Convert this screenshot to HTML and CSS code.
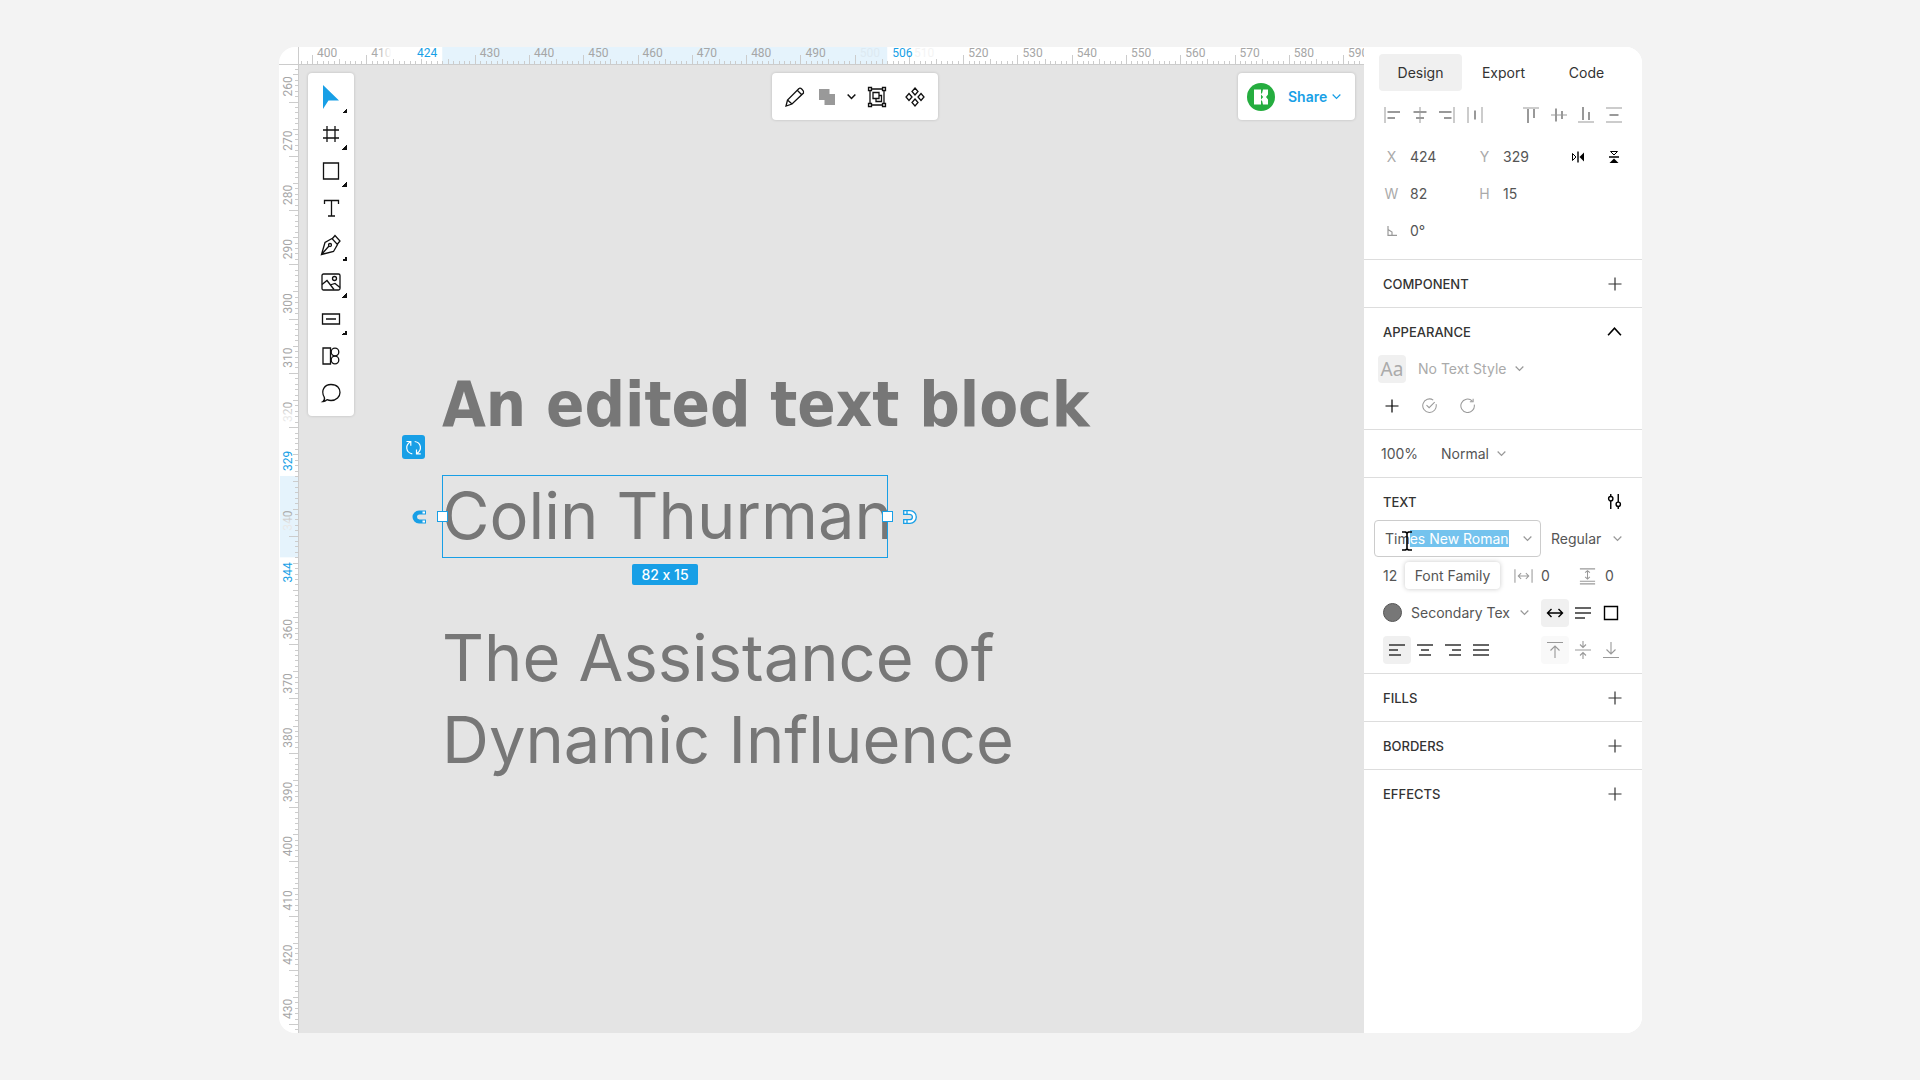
FILE: index.html
```html
<!DOCTYPE html>
<html lang="en">
<head>
<meta charset="utf-8">
<title>Design editor</title>
<link rel="stylesheet" href="styles.css">
</head>
<body>
<main class="app">
  <div class="corner"></div>
  <svg class="ruler ruler-x" id="ruler-x" aria-hidden="true"></svg>
  <svg class="ruler ruler-y" id="ruler-y" aria-hidden="true"></svg>

  <section class="stage" aria-label="Canvas">
    <nav class="toolbar tools" aria-label="Tools">
      <button class="tool has-more" aria-label="Select"><svg viewBox="0 0 24 24"><path d="M4 0v24l5.500-8.500H20z" fill="#189fe6"/></svg></button>
      <button class="tool has-more" aria-label="Frame"><svg class="line" viewBox="0 0 24 24"><path d="M8 4v16M16 4v16M4 8h16M4 16h16"/></svg></button>
      <button class="tool has-more" aria-label="Rectangle"><svg class="line" viewBox="0 0 24 24"><path d="M4.500 4h15v16h-15z"/></svg></button>
      <button class="tool" aria-label="Text"><svg class="line" viewBox="0 0 24 24"><path d="M5.500 8V4.500h14V8M12.500 4.500V20M9 20h7"/></svg></button>
      <button class="tool has-more" aria-label="Pen"><svg class="line" viewBox="0 0 24 24"><path d="M2.500 21.500 6 9.500 13 5.500 18.500 11.500 14.500 18.500zM2.500 21.500l7.500-8.500M13.500 5.500 16 2.500 21 8 18.500 11"/><circle cx="11" cy="12" r="1.500"/></svg></button>
      <button class="tool has-more" aria-label="Image"><svg class="line" viewBox="0 0 24 24"><rect x="3" y="4" width="18" height="16" rx="1.500"/><circle cx="15.500" cy="8.500" r="2"/><path d="M3 14.500 8 10.500 15 19.500M11 15l5-1.500 5 4"/></svg></button>
      <button class="tool has-more" aria-label="Button"><svg class="line" viewBox="0 0 24 24"><path d="M3.500 7h17v10h-17zM7 12h10"/></svg></button>
      <button class="tool" aria-label="Components"><svg class="line" viewBox="0 0 24 24"><path d="M4 4h7.500v16H4z"/><circle cx="16" cy="8" r="3.800"/><circle cx="16" cy="16" r="3.800"/></svg></button>
      <button class="tool" aria-label="Comment"><svg class="line" viewBox="0 0 24 24"><path d="M4 20.500c1.500-1 2-2.500 1.200-4.500C1.500 9.500 5.500 3.500 12 3.500s9 4 9 8-3.500 8-9 8c-1.500 0-2.800-.3-4-.8-1.200 1-2.500 1.700-4 1.800z"/></svg></button>
    </nav>

    <header class="topbar">
      <div class="toolbar actions">
        <button class="action" aria-label="Edit"><svg class="line" viewBox="0 0 24 24"><path d="M3 21l1.500-6L16 3.500c1.500-1.300 5.500 2.300 4.500 4.500L9 19zM14.500 5.500l4.500 4.500M4.500 15 9 19"/></svg></button>
        <button class="action union" aria-label="Boolean union"><svg viewBox="0 0 24 24"><path d="M4 4h10.500v5H20v11H9.500v-5H4z" fill="#999"/></svg><svg class="chev dark" viewBox="0 0 10 10"><path d="M1.500 3.200 5 6.800l3.500-3.600"/></svg></button>
        <button class="action" aria-label="Group"><svg class="line" viewBox="0 0 24 24"><path d="M5 4v16M19 4v16M5 4h14M5 20h14"/><path d="M3.500 2.500h3v3h-3zM17.500 2.500h3v3h-3zM3.500 18.500h3v3h-3zM17.500 18.500h3v3h-3z" fill="#fff"/><path d="M8 7.500h6v6H8z"/><path d="M14 10.500h2.500v6H11v-3"/></svg></button>
        <button class="action" aria-label="Create component"><svg class="line" viewBox="0 0 24 24"><path d="M12 3 15 6.500l-3 3.500L9 6.500zM12 14l3 3.500-3 3.500L9 17.500zM6 8.500l3 3.500-3 3.500L3 12zM18 8.500l3 3.500-3 3.500-3-3.500z"/></svg></button>
      </div>
      <div class="toolbar share">
        <svg class="avatar" viewBox="0 0 28 28" role="img" aria-label="Team"><circle cx="14" cy="14" r="14" fill="#25ad3f"/><path d="M7 6.500h7v4h1l1-4h5v5l-2 2.500 2 2.500v5h-5l-1-4h-1v4H7z" fill="#fff"/><path d="M14 11.500 16.200 14 14 16.500z" fill="#25ad3f"/></svg>
        <button class="share-btn">Share<svg class="chev" viewBox="0 0 10 10"><path d="M1.500 3.200 5 6.800l3.500-3.600"/></svg></button>
      </div>
    </header>

    <p class="text-node node-edited">An edited text block</p>
    <div class="selection">
      <p class="text-node">Colin Thurman</p>
      <span class="handle handle-l"></span>
      <span class="handle handle-r"></span>
      <span class="size-tag">82 x 15</span>
    </div>
    <p class="text-node node-assist">The Assistance of<br>Dynamic Influence</p>

    <button class="swap" aria-label="Swap"><svg viewBox="0 0 23 23"><path d="M4.500 5.500h4.300v4.300M8.500 5.800C3 9 3.500 16.500 10.300 17.800M18.800 17.800h-4.300v-4.300M14.800 17.500C20.300 14.300 19.500 6.500 12.700 5.500"/></svg></button>
    <svg class="magnet magnet-l" viewBox="0 0 14 14"><path d="M14 .5H7a6.500 6.500 0 0 0 0 13h7v-4H7.500a2.500 2.500 0 0 1 0-5H14z" fill="#189fe6"/><path d="M10.500 1.500H13v2h-2.500zM10.500 10.500H13v2h-2.500z" fill="#fff"/></svg>
    <svg class="magnet magnet-r" viewBox="0 0 14 14"><path d="M.7.700H7a6.300 6.300 0 0 1 0 12.600H.7V9.700h6a2.700 2.700 0 0 0 0-5.400h-6zM4 .7v3.600M4 9.700v3.600" fill="#fff" stroke="#189fe6" stroke-width="1.300"/></svg>
  </section>

  <aside class="panel">
    <section class="group geometry">
      <div class="tabs" role="tablist">
        <button class="tab active" role="tab" aria-selected="true">Design</button>
        <button class="tab" role="tab">Export</button>
        <button class="tab" role="tab">Code</button>
      </div>
      <div class="aligns">
        <button aria-label="Align left"><svg viewBox="0 0 16 16"><path d="M1 0v16"/><path class="b" d="M3.500 5H16M3.500 11H11"/></svg></button>
        <button aria-label="Align center"><svg viewBox="0 0 16 16"><path d="M8 0v16"/><path class="b" d="M1.500 5h13M4 11h8"/></svg></button>
        <button aria-label="Align right"><svg viewBox="0 0 16 16"><path d="M15 0v16"/><path class="b" d="M0 5h12.500M5 11h7.500"/></svg></button>
        <button aria-label="Distribute horizontally"><svg viewBox="0 0 16 16"><path d="M1 0v16M15 0v16"/><path class="b" d="M8 3.500v9"/></svg></button>
        <span></span>
        <button aria-label="Align top"><svg viewBox="0 0 16 16"><path d="M0 1h16"/><path class="b" d="M5 2v14M11 2v9"/></svg></button>
        <button aria-label="Align middle"><svg viewBox="0 0 16 16"><path d="M0 8h16"/><path class="b" d="M5 1.500v13M11 4v8"/></svg></button>
        <button aria-label="Align bottom"><svg viewBox="0 0 16 16"><path d="M0 15h16"/><path class="b" d="M5 0v13M11 5v8"/></svg></button>
        <button aria-label="Distribute vertically"><svg viewBox="0 0 16 16"><path d="M0 1h16M0 15h16"/><path class="b" d="M3.500 8h9"/></svg></button>
      </div>
      <div class="fields">
        <div class="field"><label for="x">X</label><input id="x" value="424"></div>
        <div class="field"><label for="y">Y</label><input id="y" value="329"></div>
        <div class="flips">
          <button aria-label="Flip horizontal"><svg viewBox="0 0 14 14"><path d="M7 1.500v11" stroke="#000" stroke-width="1.400"/><path d="M1.500 3.500v7L5 7z" fill="none" stroke="#000"/><path d="M13 2.500v9L8.500 7z"/></svg></button>
          <button aria-label="Flip vertical"><svg viewBox="0 0 14 14"><path d="M2 7h10" stroke="#000" stroke-width="1.400"/><path d="M3.500 1.500h7L7 5z" fill="none" stroke="#000"/><path d="M2.500 13h9L7 8.500z"/></svg></button>
        </div>
        <div class="field"><label for="w">W</label><input id="w" value="82"></div>
        <div class="field"><label for="h">H</label><input id="h" value="15"></div>
        <span></span>
        <div class="field"><label for="r" aria-label="Rotation"><svg viewBox="0 0 10 10"><path d="M1 0v9.300h9M1 3.500 5 6v3.300" fill="none" stroke="#999" stroke-width="1.200"/></svg></label><input id="r" value="0°"></div>
      </div>
    </section>

    <section class="group">
      <div class="head"><h2>COMPONENT</h2><button aria-label="Add component"><svg class="plus" viewBox="0 0 14 14"><path d="M7 .5v13M.5 7h13"/></svg></button></div>
    </section>

    <section class="group">
      <div class="head"><h2>APPEARANCE</h2><button aria-label="Collapse"><svg class="plus bold" viewBox="0 0 14 14"><path d="M1 10.500 7 4l6 6.500"/></svg></button></div>
      <div class="row style-row">
        <span class="aa">Aa</span>
        <span class="drop muted"><select aria-label="Text style"><option>No Text Style</option></select><svg class="chev" viewBox="0 0 10 10"><path d="M1.500 3.200 5 6.800l3.500-3.600"/></svg></span>
      </div>
      <div class="row style-actions">
        <button aria-label="New style"><svg class="plus strong" viewBox="0 0 14 14"><path d="M7 .5v13M.5 7h13"/></svg></button>
        <button aria-label="Apply style"><svg class="ring" viewBox="0 0 16 16"><path d="M15 6.500A7.200 7.200 0 1 1 12 2.200M4.800 7.500l2.800 2.800L13.500 4.500"/></svg></button>
        <button aria-label="Reset style"><svg class="ring" viewBox="0 0 16 16"><path d="M15.200 7A7.200 7.200 0 1 1 13 3M14 .8V4h-3.500"/></svg></button>
      </div>
    </section>

    <section class="group">
      <div class="row blend-row">
        <input class="opacity" aria-label="Opacity" value="100%">
        <span class="drop"><select aria-label="Blend mode"><option>Normal</option></select><svg class="chev" viewBox="0 0 10 10"><path d="M1.500 3.200 5 6.800l3.500-3.600"/></svg></span>
      </div>
    </section>

    <section class="group">
      <div class="head"><h2>TEXT</h2><button aria-label="Text options"><svg class="plus bold" viewBox="0 0 14 16"><path d="M3 0v2.500M3 7.500V16M11 0v8.500M11 13.500V16"/><circle cx="3" cy="5" r="2.300"/><circle cx="11" cy="11" r="2.300"/></svg></button></div>
      <div class="row font-row">
        <div class="font-box">
          <input id="font" aria-label="Font family" value="Times New Roman" spellcheck="false">
          <svg class="chev" viewBox="0 0 10 10"><path d="M1.500 3.200 5 6.800l3.500-3.600"/></svg>
          <svg class="ibeam" viewBox="0 0 12 20"><path d="M1 1h3.500L6 2l1.500-1H11M6 2v16M1 19h3.500L6 18l1.500 1H11"/></svg>
          <span class="tooltip" role="tooltip">Font Family</span>
        </div>
        <span class="drop weight"><select aria-label="Font weight"><option>Regular</option></select><svg class="chev" viewBox="0 0 10 10"><path d="M1.500 3.200 5 6.800l3.500-3.600"/></svg></span>
      </div>
      <div class="row metrics-row">
        <input class="size" aria-label="Font size" value="12">
        <div class="metric"><label for="ls" aria-label="Letter spacing"><svg viewBox="0 0 20 18"><path d="M1 2v14M19 2v14M4.500 9h11M7.500 6l-3 3 3 3M12.500 6l3 3-3 3"/></svg></label><input id="ls" value="0"></div>
        <div class="metric"><label for="ps" aria-label="Paragraph spacing"><svg viewBox="0 0 20 18"><path d="M2 1.500h16M2 14.500h16M2 17.300h16M10 3.500V12M7.500 5.500 10 3.300l2.500 2.200M7.500 10l2.500 2.200 2.500-2.200"/></svg></label><input id="ps" value="0"></div>
      </div>
      <div class="row color-row">
        <button class="swatch" aria-label="Text color"></button>
        <span class="drop color"><select aria-label="Color style"><option>Secondary Tex</option></select><svg class="chev" viewBox="0 0 10 10"><path d="M1.500 3.200 5 6.800l3.500-3.600"/></svg></span>
        <div class="seg">
          <button class="on" aria-label="Auto width"><svg viewBox="0 0 18 18"><path class="t" d="M1.500 9h15M5.500 5l-4 4 4 4M12.500 5l4 4-4 4"/></svg></button>
          <button aria-label="Auto height"><svg viewBox="0 0 18 18"><path d="M1 4h16M1 9h16M1 14h10"/></svg></button>
          <button aria-label="Fixed size"><svg viewBox="0 0 18 18"><path class="t" d="M2.500 2.500h13v13h-13z"/></svg></button>
        </div>
      </div>
      <div class="row align-row">
        <div class="seg">
          <button class="on" aria-label="Text left"><svg viewBox="0 0 18 18"><path d="M1 4h16M1 9h9M1 14h12"/></svg></button>
          <button aria-label="Text center"><svg viewBox="0 0 18 18"><path d="M1 4h16M5 9h8M3 14h12"/></svg></button>
          <button aria-label="Text right"><svg viewBox="0 0 18 18"><path d="M1 4h16M8 9h9M5 14h12"/></svg></button>
          <button aria-label="Justify"><svg viewBox="0 0 18 18"><path d="M1 4h16M1 9h16M1 14h16"/></svg></button>
        </div>
        <div class="seg dim">
          <button class="on" aria-label="Top"><svg viewBox="0 0 18 18"><path d="M1 1.500h16M9 5v12M4.500 9.500 9 5l4.500 4.500"/></svg></button>
          <button aria-label="Middle"><svg viewBox="0 0 18 18"><path d="M1 9h16M9 0v6M6 3.500l3 3 3-3M9 18v-6M6 14.500l3-3 3 3"/></svg></button>
          <button aria-label="Bottom"><svg viewBox="0 0 18 18"><path d="M1 16.500h16M9 1v12M4.500 8.500 9 13l4.500-4.500"/></svg></button>
        </div>
      </div>
    </section>

    <section class="group"><div class="head"><h2>FILLS</h2><button aria-label="Add fill"><svg class="plus" viewBox="0 0 14 14"><path d="M7 .5v13M.5 7h13"/></svg></button></div></section>
    <section class="group"><div class="head"><h2>BORDERS</h2><button aria-label="Add border"><svg class="plus" viewBox="0 0 14 14"><path d="M7 .5v13M.5 7h13"/></svg></button></div></section>
    <section class="group"><div class="head"><h2>EFFECTS</h2><button aria-label="Add effect"><svg class="plus" viewBox="0 0 14 14"><path d="M7 .5v13M.5 7h13"/></svg></button></div></section>
  </aside>
</main>
<script src="rulers.js"></script>
</body>
</html>
```
FILE: rulers.js
```js
const NS = 'http://www.w3.org/2000/svg';
const UNIT = 5.4267; // screen pixels per canvas unit at the current zoom

function add(parent, name, attrs, text) {
  const el = document.createElementNS(NS, name);
  for (const key in attrs) el.setAttribute(key, attrs[key]);
  if (text !== undefined) el.textContent = text;
  parent.appendChild(el);
  return el;
}

function gradient(svg, id, from, to) {
  const g = add(svg, 'linearGradient', { id });
  add(g, 'stop', { offset: 0, 'stop-color': from });
  add(g, 'stop', { offset: .35, 'stop-color': from });
  add(g, 'stop', { offset: 1, 'stop-color': to });
}

function drawRuler(svg, opts) {
  const box = svg.getBoundingClientRect();
  const vertical = opts.vertical;
  const length = vertical ? box.height : box.width;
  const depth = (vertical ? box.width : box.height);
  const at = n => (n - opts.origin) * UNIT + opts.offset;

  const a = at(opts.selection[0]);
  const b = at(opts.selection[1]);
  add(svg, 'rect', vertical
    ? { x: 1, y: a, width: depth - 1, height: b - a, class: 'band' }
    : { x: a, y: 0, width: b - a, height: depth, class: 'band' });

  function label(n, pos, extra) {
    const attrs = vertical
      ? { transform: `translate(13 ${pos}) rotate(-90)` }
      : { x: pos, y: 10 };
    add(svg, 'text', Object.assign(attrs, extra), n);
  }

  const first = Math.ceil(opts.origin - opts.offset / UNIT);
  for (let n = first; at(n) < length; n++) {
    const p = Math.round(at(n));
    const near = opts.hidden.includes(n);
    const size = n % 10 === 0 && !near ? 10 : n % 5 === 0 ? 6 : 4;
    add(svg, 'path', { class: 'tick', d: vertical
      ? `M${depth - size} ${p + .5}h${size}`
      : `M${p + .5} ${depth - size}v${size}` });
    if (n % 10 === 0 && !near) {
      label(n, at(n) + (vertical ? -5 : 5), opts.faded[n] || {});
    }
  }

  const [s, e] = opts.selection;
  label(s, a - 5, { class: 'mark', 'text-anchor': vertical ? 'start' : 'end' });
  label(e, b + 5, { class: 'mark', 'text-anchor': vertical ? 'end' : 'start' });
}

const rx = document.getElementById('ruler-x');
const ry = document.getElementById('ruler-y');
gradient(rx, 'fade-out', '#aaa', '#fff');
gradient(ry, 'fade-in', '#e8e8e8', '#999');

drawRuler(rx, {
  vertical: false, origin: 400, offset: 13, selection: [424, 506], hidden: [420],
  faded: { 410: { style: 'fill:url(#fade-out)' }, 500: { opacity: .12 }, 510: { opacity: .12 } }
});
drawRuler(ry, {
  vertical: true, origin: 260, offset: 36.5, selection: [329, 344], hidden: [330, 350],
  faded: { 320: { style: 'fill:url(#fade-in)' }, 340: { style: 'fill:url(#fade-in)' } }
});

const font = document.getElementById('font');
font.focus({ preventScroll: true });
font.setSelectionRange(3, font.value.length);
```
FILE: styles.css
```css
* { box-sizing: border-box; }

body {
  margin: 0;
  padding: 47px 278px 47px 279px;
  background: #f3f3f3;
  color: #444;
  font: 14px/20px Inter, "Liberation Sans", sans-serif;
  font-variant-ligatures: no-contextual;
}

button, input, select {
  margin: 0;
  padding: 0;
  border: 0;
  outline: 0;
  background: none;
  color: inherit;
  font: inherit;
}
select { appearance: none; }
input { min-width: 0; }
p, h2 { margin: 0; }
svg { display: block; flex: none; }

.app {
  display: grid;
  grid-template: 18px 1fr / 20px 1fr 278px;
  min-height: calc(100vh - 94px);
  border-radius: 16px;
  background: #fff;
  overflow: hidden;
}

/* Rulers */
.corner, .ruler-y { border-right: 1px solid #ccc; }
.corner, .ruler-x { border-bottom: 1px solid #ccc; }
.ruler { width: 100%; height: 100%; overflow: hidden; }
.ruler text { font: 12px Roboto, "Liberation Sans", sans-serif; fill: #a6a6a6; }
.ruler .mark { fill: #189fe6; }
.ruler .band { fill: #e5f3fc; }
.ruler .tick { stroke: #ccc; stroke-width: 1; }
.ruler-y { grid-area: 2 / 1; }

/* Canvas */
.stage {
  position: relative;
  grid-area: 2 / 2;
  display: flex;
  align-items: flex-start;
  padding: 8px 9px;
  background: #e4e4e4;
}
.toolbar {
  border-radius: 4px;
  background: #fff;
  box-shadow: 0 0 3px rgba(0, 0, 0, .18);
}
.tools {
  display: flex;
  flex-direction: column;
  width: 46px;
  padding: 5px 0;
}
.tool {
  position: relative;
  display: grid;
  place-items: center;
  height: 37px;
}
.tool svg, .action svg:first-child { width: 24px; height: 24px; }
.line { fill: none; stroke: #111; stroke-width: 1.3; }
.has-more::after {
  content: "";
  position: absolute;
  right: 7px;
  bottom: 2px;
  width: 5px;
  height: 5px;
  background: linear-gradient(135deg, transparent 50%, #111 50%);
}
.topbar {
  flex: 1;
  display: grid;
  grid-template-columns: 1fr auto 1fr;
}
.actions {
  grid-column: 2;
  display: flex;
  align-items: center;
  gap: 8px;
  width: 166px;
  height: 47px;
  padding: 0 11px;
}
.action { display: flex; align-items: center; }
.action:last-child { margin-left: auto; }
.union { gap: 7px; }
.chev {
  width: 11px;
  height: 11px;
  fill: none;
  stroke: #999;
  stroke-width: 1.1;
}
.chev.dark { stroke: #111; stroke-width: 1.4; }
.share {
  justify-self: end;
  display: flex;
  align-items: center;
  gap: 13px;
  width: 117px;
  height: 47px;
  padding: 0 9px;
}
.avatar { width: 28px; height: 28px; }
.share-btn {
  display: flex;
  align-items: center;
  gap: 4px;
  color: #189fe6;
  font-weight: 600;
}
.share-btn .chev { stroke: #189fe6; }

.text-node {
  color: #777;
  font-size: 65px;
  line-height: 82px;
  white-space: nowrap;
}
.node-edited {
  position: absolute;
  left: 143px;
  top: 299px;
  font-family: Jokerman, "DejaVu Sans Condensed", fantasy;
  font-size: 63px;
  font-weight: 700;
}
.node-assist { position: absolute; left: 143px; top: 552px; }
.selection {
  position: absolute;
  left: 143px;
  top: 410px;
  width: 446px;
  height: 83px;
  outline: 1px solid #189fe6;
  outline-offset: -1px;
}
.handle {
  position: absolute;
  top: 36px;
  width: 11px;
  height: 11px;
  border: 1px solid #189fe6;
  background: #fff;
}
.handle-l { left: -5px; }
.handle-r { right: -5px; }
.size-tag {
  position: absolute;
  top: 89px;
  left: 50%;
  width: 66px;
  margin-left: -33px;
  border-radius: 2px;
  background: #189fe6;
  color: #fff;
  font-weight: 500;
  line-height: 21px;
  text-align: center;
}
.swap {
  position: absolute;
  left: 103px;
  top: 370px;
  width: 23px;
  height: 24px;
  border-radius: 3px;
  background: #189fe6;
}
.swap svg { width: 23px; height: 23px; fill: none; stroke: #fff; stroke-width: 1.2; }
.magnet { position: absolute; top: 445px; width: 14px; height: 14px; }
.magnet-l { left: 113px; }
.magnet-r { left: 604px; }

/* Inspector */
.panel { grid-area: 1 / 3 / 3 / 4; background: #fff; color: #555; }
.group { padding-bottom: 5px; border-bottom: 1px solid #ddd; }
.group:last-child { border: 0; }
.geometry { padding: 7px 14px 10px; }
.tabs { display: flex; padding: 0 0 0 1px; }
.tab { flex: 1; height: 37px; border-radius: 4px; color: #333; }
.tab.active { background: #f0f0f0; }
.aligns {
  display: grid;
  grid-template-columns: repeat(9, 1fr);
  height: 37px;
  margin: 5px 0;
}
.aligns button { display: grid; place-items: center; }
.aligns svg { width: 16px; height: 16px; stroke: #999; stroke-width: 1; }
.aligns .b { stroke-width: 2; }
.fields { display: grid; grid-template-columns: 93px 93px 1fr; grid-auto-rows: 37px; }
.field { display: flex; align-items: center; }
.field label { width: 27px; color: #aaa; text-align: center; }
.field label svg { width: 10px; height: 10px; margin: 0 auto; }
.field input { flex: 1; width: 40px; padding-left: 5px; }
.flips { display: flex; justify-content: space-between; }
.flips button { display: grid; place-items: center; width: 28px; }
.flips svg { width: 14px; height: 14px; }

.head {
  display: flex;
  align-items: center;
  justify-content: space-between;
  height: 42px;
  padding: 5px 19px 0;
}
.head h2 { color: #333; font-size: 13px; font-weight: 500; }
.plus { width: 14px; height: 14px; fill: none; stroke: #333; stroke-width: 1.2; }
.head button { margin-right: 1px; }
.plus.bold { width: 15px; height: 15px; stroke: #000; stroke-width: 1.5; }
.plus.strong { stroke: #000; }
.row { display: flex; align-items: center; height: 37px; padding: 0 19px; }
.drop { display: flex; align-items: center; gap: 7px; }
.muted { color: #aaa; }
.style-row { padding-left: 14px; gap: 12px; }
.aa {
  width: 28px;
  border-radius: 4px;
  background: #f0f0f0;
  color: #aaa;
  font: 19px/28px "Noto Sans", sans-serif;
  text-align: center;
}
.style-actions { gap: 23px; padding-left: 21px; }
.ring { width: 15px; height: 15px; fill: none; stroke: #999; stroke-width: 1.1; }
.blend-row { height: 42px; padding: 5px 17px 0; }
.opacity { width: 60px; }
.font-row { padding: 0 19px 0 10px; justify-content: space-between; }
.font-box {
  position: relative;
  display: flex;
  align-items: center;
  width: 167px;
  height: 37px;
  padding: 0 7px 0 10px;
  border: 1px solid #ccc;
  border-radius: 4px;
}
.font-box input { flex: 1; line-height: 17px; }
.font-box input::selection { background: #74c3ee; color: #fff; }
.ibeam {
  position: absolute;
  left: 26px;
  top: 10px;
  width: 12px;
  height: 20px;
  fill: none;
  stroke: #000;
  stroke-width: 1.6;
}
.tooltip {
  position: absolute;
  left: 30px;
  top: 41px;
  width: 95px;
  border-radius: 4px;
  background: #fff;
  box-shadow: 0 0 5px rgba(0, 0, 0, .22);
  line-height: 27px;
  text-align: center;
}
.weight { width: 72px; justify-content: space-between; }
.metrics-row { justify-content: flex-end; gap: 19px; }
.size { width: 30px; margin-right: auto; }
.metric { display: flex; align-items: center; gap: 8px; }
.metric input { width: 18px; }
.metric svg { width: 19px; height: 18px; fill: none; stroke: #999; stroke-width: 1.1; }
.color-row { padding-right: 17px; }
.swatch {
  width: 19px;
  height: 19px;
  border: 1px solid #555;
  border-radius: 50%;
  background: #777;
}
.color { flex: 1; margin: 0 11px 0 9px; justify-content: space-between; }
.seg { display: flex; }
.seg button {
  display: grid;
  place-items: center;
  width: 28px;
  height: 28px;
  border-radius: 4px;
}
.seg .on { background: #f0f0f0; }
.seg svg { width: 18px; height: 18px; fill: none; stroke: #333; stroke-width: 1.4; }
.seg .t { stroke: #000; }
.align-row { justify-content: space-between; padding-right: 17px; }
.dim svg { stroke: #999; stroke-width: 1.1; }
.dim .on { background: #f9f9f9; }
```
